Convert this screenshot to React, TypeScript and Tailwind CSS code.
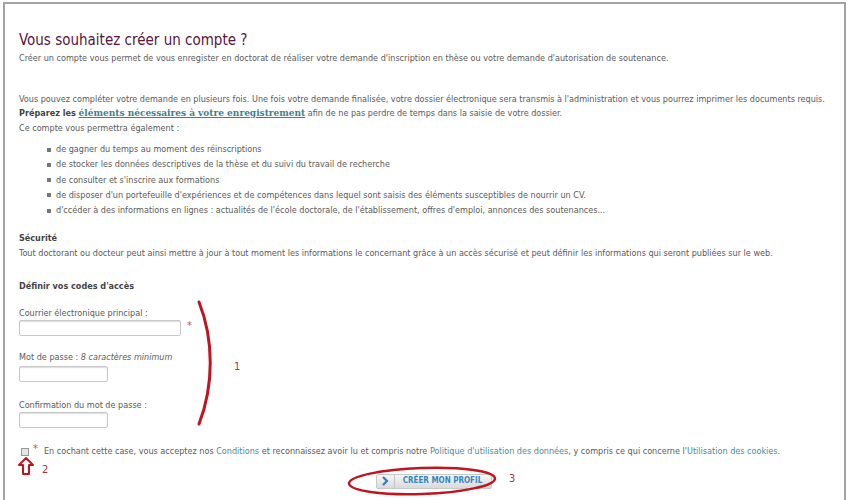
const font = { fontFamily: '"DejaVu Sans Condensed", "DejaVu Sans", sans-serif' }

const bullets = [
  "de gagner du temps au moment des réinscriptions",
  "de stocker les données descriptives de la thèse et du suivi du travail de recherche",
  "de consulter et s'inscrire aux formations",
  "de disposer d'un portefeuille d'expériences et de compétences dans lequel sont saisis des éléments susceptibles de nourrir un CV.",
  "d'ccéder à des informations en lignes : actualités de l'école doctorale, de l'établissement, offres d'emploi, annonces des soutenances...",
]

const Annotations = () => (
  <>
    <svg className="absolute left-0 top-0 pointer-events-none" width="850" height="500">
      <path d="M199 302 C 214 340, 214 385, 199 424" stroke="#c0141e" strokeWidth="3" fill="none" strokeLinecap="round" />
      <ellipse cx="422" cy="481" rx="73" ry="13" stroke="#c0141e" strokeWidth="2.5" fill="none" transform="rotate(-2 422 481)" />
      <path d="M26 458 L33 465 L29 465 L29 474 L23 474 L23 465 L19 465 Z" stroke="#c0141e" strokeWidth="2" fill="white" strokeLinejoin="round" />
    </svg>
    <span className="absolute left-[42px] top-[462px] text-[11px] text-[#b0303a]">2</span>
    <span className="absolute left-[234px] top-[359px] text-[11px] text-[#b0303a]">1</span>
    <span className="absolute left-[509px] top-[471px] text-[11px] text-[#b0303a]">3</span>
  </>
)

export default function App() {
  return (
    <div className="relative w-[850px] h-[500px] overflow-hidden bg-white" style={font}>
      <div className="ml-[3px] mt-[2px] w-[843px] h-[520px] border-2 border-[#a3a3a3] pl-[14px] pt-[26px] text-[9px] text-[#5a5a5a] leading-[14.5px]">
        <h1 className="text-[15px] leading-[20px] text-[#5b1340]">Vous souhaitez créer un compte ?</h1>
        <p className="mt-[1px]">
          Créer un compte vous permet de vous enregister en doctorat de réaliser votre demande d'inscription en thèse ou votre demande d'autorisation de soutenance.
        </p>
        <div className="mt-[26px]">
          <p>Vous pouvez compléter votre demande en plusieurs fois. Une fois votre demande finalisée, votre dossier électronique sera transmis à l'administration et vous pourrez imprimer les documents requis.</p>
          <p>
            <b className="text-[#444]">Préparez les </b>
            <a className="font-bold underline text-[#3f7f8f]" style={{ fontFamily: '"DejaVu Serif", serif' }}>éléments nécessaires à votre enregistrement</a>
            {" "}afin de ne pas perdre de temps dans la saisie de votre dossier.
          </p>
          <p>Ce compte vous permettra également :</p>
        </div>
        <ul className="mt-[7px] pl-[28px] flex flex-col">
          {bullets.map((b) => (
            <li key={b} className="flex items-center gap-[5px] leading-[15.25px]">
              <span className="w-[4px] h-[4px] bg-[#777] shrink-0" />
              {b}
            </li>
          ))}
        </ul>
        <div className="mt-[13px]">
          <p className="font-bold text-[#444]">Sécurité</p>
          <p>Tout doctorant ou docteur peut ainsi mettre à jour à tout moment les informations le concernant grâce à un accès sécurisé et peut définir les informations qui seront publiées sur le web.</p>
        </div>
        <p className="mt-[19px] font-bold text-[#444]">Définir vos codes d'accès</p>
        <div className="mt-[12px] flex flex-col">
          <label>Courrier électronique principal :</label>
          <div className="flex items-start gap-[6px]">
            <input className="w-[162px] h-[16px] border border-[#c8c8c8] rounded-[2px] shadow-[inset_0_1px_1px_#ddd]" />
            <span className="text-[#c0505a] text-[11px] leading-[12px]">*</span>
          </div>
          <label className="mt-[14px]">Mot de passe : <i>8 caractères minimum</i></label>
          <input className="mt-[1px] w-[89px] h-[16px] border border-[#c8c8c8] rounded-[2px] shadow-[inset_0_1px_1px_#ddd]" />
          <label className="mt-[16px]">Confirmation du mot de passe :</label>
          <input className="w-[89px] h-[16px] border border-[#c8c8c8] rounded-[2px] shadow-[inset_0_1px_1px_#ddd]" />
        </div>
        <div className="mt-[16px] ml-[2px] flex items-center gap-[4px]">
          <span className="w-[8px] h-[8px] border border-[#999] bg-[#e4e4e4]" />
          <span className="text-[#c0505a] text-[11px] leading-[10px] self-start">*</span>
          <span className="ml-[2px]">
            En cochant cette case, vous acceptez nos <a className="text-[#4a8a9a]">Conditions</a> et reconnaissez avoir lu et compris notre <a className="text-[#4a8a9a]">Politique d'utilisation des données</a>, y compris ce qui concerne l'<a className="text-[#4a8a9a]">Utilisation des cookies</a>.
          </span>
        </div>
        <div className="mt-[15px] flex justify-center pl-[4px]">
          <button className="flex items-center h-[15px] w-[116px] border border-[#c9c9c9] rounded-[2px] bg-gradient-to-b from-[#f6f6f6] to-[#dadada]">
            <span className="w-[18px] h-full flex items-center justify-center border-r border-[#c4c4c4]">
              <svg width="7" height="10" viewBox="0 0 7 10"><path d="M1 1 L5 5 L1 9" stroke="#2f7fbf" strokeWidth="2.2" fill="none" /></svg>
            </span>
            <span className="flex-1 text-center text-[8px] font-bold text-[#3587c0]">CRÉER MON PROFIL</span>
          </button>
        </div>
      </div>
      <Annotations />
    </div>
  )
}
